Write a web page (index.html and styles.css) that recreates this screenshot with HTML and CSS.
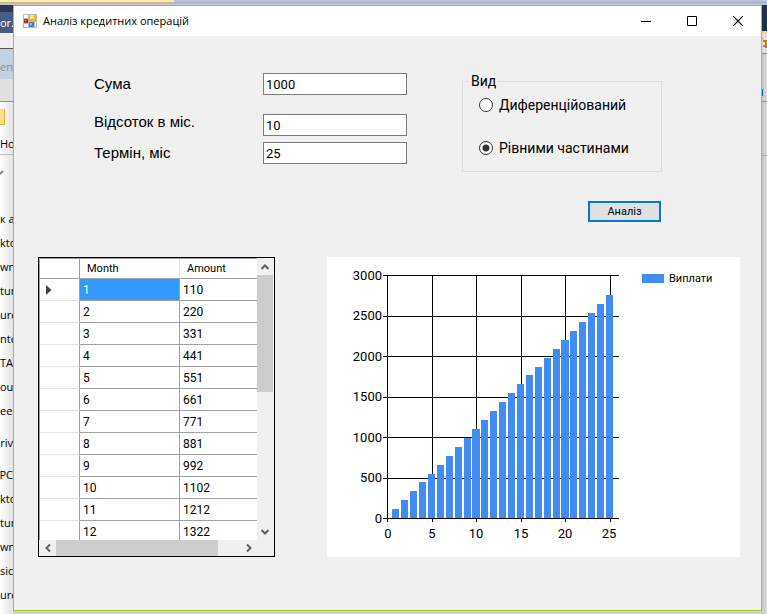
FILE: index.html
```html
<!DOCTYPE html>
<html lang="uk">
<head>
<meta charset="utf-8">
<title>Аналіз кредитних операцій</title>
<link rel="stylesheet" href="styles.css">
</head>
<body>
<div class="desktop">
  <div class="top-strip"><span class="top-tab"></span><span class="top-rest"></span></div>
  <div class="behind-left">
    <div class="bl-title">or.c</div>
    <div class="bl-band"></div>
    <div class="bl-tab">еп</div>
    <div class="bl-grey"></div>
    <div class="bl-ribbon"><span class="folder"></span><span>Ho</span></div>
    <div class="bl-arrow"><svg width="6" height="6" viewBox="0 0 6 6"><path d="M0 4L3 1" stroke="#888" stroke-width="2" fill="none"/></svg></div>
    <ul class="bl-list">
      <li>к а</li><li>kto</li><li>wnl</li><li>tur</li><li>ure</li><li>nte</li><li>TA</li><li>ou</li><li>een</li>
      <li class="root">Driv</li>
      <li class="root">PC</li><li>kto</li><li>tur</li><li>wnl</li><li>sic</li><li>ure</li>
    </ul>
  </div>
  <div class="behind-right">
    <div class="br-navy"></div>
    <div class="br-icon"><svg width="5" height="14" viewBox="0 0 5 14"><path d="M0 1v1M1 4h3v5h-3M4 3v8" stroke="#c77a1c" stroke-width="2" fill="none"/></svg></div>
    <div class="br-grey"><span class="br-mark"></span></div>
    <div class="br-page"></div>
  </div>

  <main class="window">
    <header class="titlebar">
      <svg class="app-icon" width="14" height="14" viewBox="0 0 14 14">
        <rect width="14" height="14" fill="#b9b9b9"/>
        <rect x="1" y="1" width="4" height="3" fill="#fff"/><rect x="1" y="10" width="4" height="3" fill="#fff"/>
        <rect x="1" y="5" width="4" height="4" fill="#c4281c"/><rect x="2" y="6" width="1" height="1" fill="#f4a49c"/>
        <rect x="6" y="1" width="7" height="6" fill="#f2b50c"/><rect x="7" y="1" width="4" height="4" fill="#ffe27a"/>
        <rect x="6" y="8" width="5" height="5" fill="#3f7fe0"/><rect x="7" y="9" width="2" height="2" fill="#8bb8ff"/>
        <rect x="12" y="8" width="1" height="5" fill="#fff"/>
      </svg>
      <h1>Аналіз кредитних операцій</h1>
      <button class="caption" aria-label="Згорнути"><svg width="10" height="11" viewBox="0 0 10 11"><path d="M0 5.500h10" stroke="#000"/></svg></button>
      <button class="caption" aria-label="Розгорнути"><svg width="10" height="10" viewBox="0 0 10 10"><path d="M.5 .5h9v9h-9z" stroke="#000" fill="none"/></svg></button>
      <button class="caption" aria-label="Закрити"><svg width="10" height="10" viewBox="0 0 10 10"><path d="M0 0l10 10M10 0l-10 10" stroke="#000" stroke-width="1.200"/></svg></button>
    </header>

    <div class="client">
      <form class="params">
        <div class="fields">
          <div class="field"><label for="sum">Сума</label><input id="sum" type="text" value="1000"></div>
          <div class="field tall"><label for="rate">Відсоток в міс.</label><input id="rate" type="text" value="10"></div>
          <div class="field"><label for="term">Термін, міс</label><input id="term" type="text" value="25"></div>
        </div>
        <div class="options">
          <fieldset>
            <legend>Вид</legend>
            <label class="radio"><input type="radio" name="kind"><span>Диференційований</span></label>
            <label class="radio"><input type="radio" name="kind" checked><span>Рівними частинами</span></label>
          </fieldset>
          <button class="analyze" type="button">Аналіз</button>
        </div>
      </form>

      <section class="results">
        <div class="datagrid">
          <div class="cells">
            <table>
              <colgroup><col class="c-head"><col class="c-month"><col></colgroup>
              <thead><tr><td></td><th scope="col">Month</th><th scope="col">Amount</th></tr></thead>
              <tbody>
                <tr><td><svg width="6" height="10" viewBox="0 0 6 10"><path d="M0 0l5.500 5L0 10z" fill="#404040"/></svg></td><td class="selected">1</td><td>110</td></tr>
                <tr><td></td><td>2</td><td>220</td></tr>
                <tr><td></td><td>3</td><td>331</td></tr>
                <tr><td></td><td>4</td><td>441</td></tr>
                <tr><td></td><td>5</td><td>551</td></tr>
                <tr><td></td><td>6</td><td>661</td></tr>
                <tr><td></td><td>7</td><td>771</td></tr>
                <tr><td></td><td>8</td><td>881</td></tr>
                <tr><td></td><td>9</td><td>992</td></tr>
                <tr><td></td><td>10</td><td>1102</td></tr>
                <tr><td></td><td>11</td><td>1212</td></tr>
                <tr><td></td><td>12</td><td>1322</td></tr>
              </tbody>
            </table>
          </div>
          <div class="vscroll">
            <button aria-label="Вгору"><svg width="8" height="6" viewBox="0 0 8 6"><path d="M.5 5L4 1.500 7.500 5" stroke="#606060" stroke-width="2" fill="none"/></svg></button>
            <span class="thumb"></span>
            <button aria-label="Вниз"><svg width="8" height="6" viewBox="0 0 8 6"><path d="M.5 1L4 4.500 7.500 1" stroke="#606060" stroke-width="2" fill="none"/></svg></button>
          </div>
          <div class="hscroll">
            <button aria-label="Ліворуч"><svg width="6" height="8" viewBox="0 0 6 8"><path d="M5 .5L1.500 4 5 7.500" stroke="#606060" stroke-width="2" fill="none"/></svg></button>
            <span class="thumb"></span>
            <button aria-label="Праворуч"><svg width="6" height="8" viewBox="0 0 6 8"><path d="M1 .5L4.500 4 1 7.500" stroke="#606060" stroke-width="2" fill="none"/></svg></button>
          </div>
        </div>

        <div class="chart">
          <svg class="plot" viewBox="0 0 300 300" width="300" height="300" role="img" aria-label="Виплати">
            <path class="grid" d="M56 18.500H292M56 59.500H292M56 99.500H292M56 140.500H292M56 180.500H292M56 221.500H292M56 261.500H292M60.500 18V265M105.500 18V265M149.500 18V265M194.500 18V265M238.500 18V265M283.500 18V265"/>
            <g class="bars">
              <rect x="65" y="252" width="7" height="9"/><rect x="74" y="243" width="7" height="18"/>
              <rect x="83" y="234" width="7" height="27"/><rect x="92" y="225" width="7" height="36"/>
              <rect x="101" y="217" width="7" height="44"/><rect x="110" y="208" width="7" height="53"/>
              <rect x="119" y="199" width="7" height="62"/><rect x="128" y="190" width="7" height="71"/>
              <rect x="137" y="181" width="7" height="80"/><rect x="145" y="172" width="8" height="89"/>
              <rect x="154" y="163" width="7" height="98"/><rect x="163" y="154" width="7" height="107"/>
              <rect x="172" y="145" width="7" height="116"/><rect x="181" y="136" width="7" height="125"/>
              <rect x="190" y="127" width="7" height="134"/><rect x="199" y="118" width="7" height="143"/>
              <rect x="208" y="110" width="7" height="151"/><rect x="217" y="101" width="7" height="160"/>
              <rect x="226" y="92" width="7" height="169"/><rect x="234" y="83" width="8" height="178"/>
              <rect x="243" y="74" width="7" height="187"/><rect x="252" y="65" width="7" height="196"/>
              <rect x="261" y="56" width="7" height="205"/><rect x="270" y="47" width="7" height="214"/>
              <rect x="279" y="38" width="7" height="223"/>
            </g>
            <g class="y-labels">
              <text x="55" y="23">3000</text><text x="55" y="63">2500</text><text x="55" y="104">2000</text>
              <text x="55" y="144">1500</text><text x="55" y="185">1000</text><text x="55" y="225">500</text><text x="55" y="266">0</text>
            </g>
            <g class="x-labels">
              <text x="61" y="281">0</text><text x="105" y="281">5</text><text x="149" y="281">10</text>
              <text x="194" y="281">15</text><text x="238" y="281">20</text><text x="282" y="281">25</text>
            </g>
          </svg>
          <div class="legend"><span class="swatch"></span><span>Виплати</span></div>
        </div>
      </section>
    </div>
  </main>
</div>
</body>
</html>
```
FILE: styles.css
```css
* { box-sizing: border-box; }
body { margin: 0; font-family: Roboto, "Liberation Sans", sans-serif; font-size: 12px; color: #000; }
button { padding: 0; border: 0; background: none; font: inherit; color: inherit; }
svg { display: block; }

.desktop { position: relative; height: 100vh; padding: 5px 5px 3px 13px; overflow: hidden; background: #d0d0d0; }

/* windows lying underneath */
.top-strip { position: absolute; inset: 0 0 auto 0; height: 5px; display: flex; background: #bcc3d6; }
.top-tab { width: 174px; height: 3px; background: #f5ecca; border-bottom: 1px solid #dcb45c; }
.top-rest { flex: 1; height: 3px; border-bottom: 1px solid #a3abc4; }
.behind-left { position: absolute; inset: 5px auto 0 0; width: 13px; overflow: hidden; white-space: nowrap; background: linear-gradient(90deg, #fff, #e2e2e2); font: 11px/24px "Open Sans", sans-serif; }
.bl-title { height: 28px; padding-top: 6px; background: linear-gradient(#293955 7px, #4a5b82 7px); color: #fff; line-height: 24px; }
.bl-band { height: 16px; background: #eee; border-bottom: 1px solid #555; }
.bl-tab { height: 30px; padding-top: 6px; background: #c3d0df; color: #8b929b; }
.bl-grey { height: 23px; background: #e0e0e0; border-bottom: 1px solid #909090; }
.bl-ribbon { height: 53px; padding-top: 7px; border-bottom: 1px solid #bbb; line-height: 38px; }
.folder { display: block; width: 5px; height: 16px; background: #fbe08b; border: solid #dfb43c; border-width: 0 1px 1px 0; }
.bl-arrow { height: 52px; padding-top: 15px; }
.bl-list { margin: 0; padding: 0; list-style: none; }
.bl-list .root { margin-top: 8px; direction: rtl; }
.behind-right { position: absolute; inset: 5px 0 0 auto; width: 5px; background: linear-gradient(90deg, #c4c4c4, #dcdcdc); }
.br-navy { height: 28px; background: #22304c; border-bottom: 2px solid #e5d68c; }
.br-icon { height: 21px; padding-top: 4px; background: #e0e0e0; border-bottom: 1px solid #7f8db0; }
.br-grey { height: 48px; padding-top: 35px; border-bottom: 1px solid #999; }
.br-mark { display: block; width: 1px; height: 7px; background: #1a50d8; }
.br-page { height: 54px; border-bottom: 1px solid #aaa; }

/* main window */
.window { position: relative; height: 100%; border: 1px solid #9bcb25; background: #f0f0f0; display: flex; flex-direction: column; }
.titlebar { height: 30px; display: flex; align-items: center; background: #fff; padding-left: 9px; }
.titlebar h1 { flex: 1; margin: 0 0 0 6px; font: 11px/16px "Open Sans", sans-serif; }
.caption { width: 46px; height: 30px; display: grid; place-items: center; }
.client { flex: 1; padding: 37px 21px 0 24px; }

.params { display: flex; height: 184px; padding-left: 56px; gap: 55px; }
.fields { display: flex; flex-direction: column; gap: 6px; }
.field { display: grid; grid-template-columns: 169px 144px; height: 22px; font-size: 15px; line-height: 22px; font-family: "Liberation Sans", sans-serif; }
.field.tall { height: 25px; margin-top: 10px; }
.field input { align-self: end; width: 100%; height: 22px; padding: 0 2px; border: 1px solid #7a7a7a; border-radius: 0; background: #fff; font: 13px Roboto, sans-serif; color: #000; }
.options { width: 200px; display: flex; flex-direction: column; align-items: flex-end; }
fieldset { width: 100%; height: 99px; margin: 0; padding: 0 16px; border: 1px solid #dcdcdc; font-size: 14px; }
legend { margin-left: -10px; padding: 0 2px; line-height: 16px; }
.radio { display: flex; align-items: center; gap: 6px; height: 16px; margin-bottom: 27px; }
.radio:first-of-type { margin-top: 8px; }
.radio input { appearance: none; flex: none; width: 14px; height: 14px; margin: 0; border: 1px solid #333; border-radius: 50%; background: #fff; }
.radio input:checked { background: radial-gradient(circle, #333 3px, #fff 4px); }
.analyze { width: 73px; height: 21px; margin: 29px 1px 0 0; border: 2px solid #0078d7; background: #e1e1e1; font-size: 11px; }

.results { display: flex; gap: 52px; height: 300px; }
.datagrid { flex: none; width: 237px; display: grid; grid-template: 1fr 16px / 1fr 17px; border: 1px solid #000; background: #f0f0f0; }
.cells { overflow: hidden; background: #fff; border: solid #a0a0a0; border-width: 1px 0 0 1px; }
table { width: 100%; table-layout: fixed; border-collapse: separate; border-spacing: 0; }
.c-head { width: 40px; }
.c-month { width: 100px; }
th, td { height: 22px; padding: 0 3px; border: solid #a0a0a0; border-width: 0 1px 1px 0; text-align: left; line-height: 16px; font-weight: 400; }
thead td, th { height: 20px; }
th { padding-left: 7px; font-size: 11px; }
th:nth-child(2) { border-right-color: #e5e5e5; }
th:last-child, td:last-child { border-right: 0; }
tbody td:first-child { padding-left: 6px; border-bottom-color: #e3e3e3; }
td.selected { background: #3399ff; color: #fff; }
.vscroll, .hscroll { display: flex; background: #f0f0f0; }
.vscroll { flex-direction: column; }
.vscroll button, .hscroll button { width: 16px; height: 17px; display: grid; place-items: center; }
.hscroll button { width: 17px; height: 16px; }
.thumb { background: #cdcdcd; }
.vscroll .thumb { width: 16px; height: 117px; }
.hscroll .thumb { width: 162px; }
.vscroll button:last-child { margin-top: auto; }
.hscroll button:last-child { margin-left: auto; }

.chart { flex: 1; display: flex; background: #fff; }
.plot { flex: none; font-size: 13px; }
.grid { stroke: #000; fill: none; }
.bars { fill: #418cf0; }
.y-labels { text-anchor: end; }
.x-labels { text-anchor: middle; }
.legend { display: flex; align-items: center; gap: 5px; height: 16px; margin: 13px 0 0 15px; font-size: 11px; }
.swatch { width: 22px; height: 9px; background: #418cf0; }
```
